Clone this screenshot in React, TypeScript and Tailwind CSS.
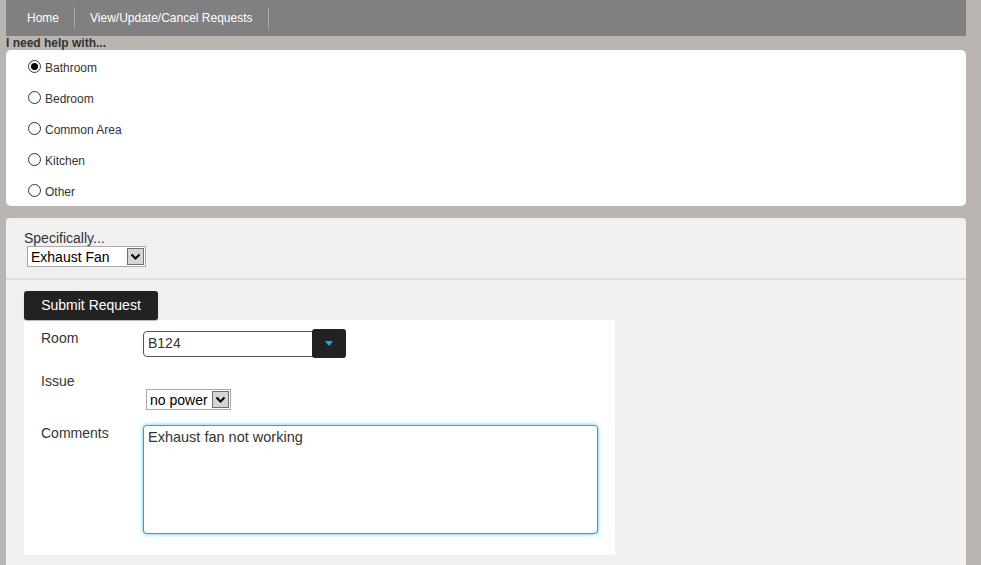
import React from 'react';

const rooms = ['Bathroom', 'Bedroom', 'Common Area', 'Kitchen', 'Other'];

const Chevron: React.FC = () => (
  <svg width="11" height="8" viewBox="0 0 11 8">
    <path d="M1.5 1.5 L5.5 5.5 L9.5 1.5" fill="none" stroke="#000" strokeWidth="2" />
  </svg>
);

// old windows-looking select box
const FakeSelect: React.FC<{ value: string; className: string; text: string }> = ({ value, className, text }) => (
  <div className={`flex items-center border border-[#a9a9a9] bg-white h-[21px] ${className}`}>
    <span className={`flex-1 pl-[3px] text-black leading-none ${text}`}>{value}</span>
    <span className="flex items-center justify-center w-[17px] h-[17px] mr-[1px] bg-[#d8d4cf] border border-[#707070]">
      <Chevron />
    </span>
  </div>
);

export default function App() {
  return (
    <div className="w-[981px] h-[565px] overflow-hidden bg-[#bab5b1] font-['Liberation_Sans',Arial,sans-serif] text-[#333]">
      <div className="ml-[6px] w-[960px]">
        {/* Nav */}
        <div className="h-[36px] bg-[#808080] flex items-center text-white text-[12px]">
          <div className="pl-[21px] pr-[15px] h-[22px] flex items-center border-r border-[#aaa]">Home</div>
          <div className="px-[15px] h-[22px] flex items-center border-r border-[#aaa]">View/Update/Cancel Requests</div>
        </div>

        <div className="font-bold text-[12px] leading-[14px]">I need help with...</div>

        {/* Room type */}
        <div className="bg-white rounded-[5px] h-[156px] pt-[2px] pl-[22px]">
          {rooms.map((r, i) => (
            <div key={r} className="flex items-center h-[31px] text-[12px]">
              <span className="w-[13px] h-[13px] rounded-full border border-[#333] bg-white flex items-center justify-center -mt-[3px]">
                {i === 0 && <span className="w-[7px] h-[7px] rounded-full bg-black" />}
              </span>
              <span className="ml-[4px]">{r}</span>
            </div>
          ))}
        </div>

        {/* Specifically */}
        <div className="mt-[12px] bg-[#f0f0f0] rounded-t-[4px] h-[62px] pt-[12px] pl-[18px] border-b-2 border-[#dddddd]">
          <div className="text-[14px] leading-[16px]">Specifically...</div>
          <FakeSelect value="Exhaust Fan" className="w-[119px] ml-[3px]" text="text-[14px]" />
        </div>

        {/* Request form */}
        <div className="bg-[#f0f0f0] h-[300px] pt-[11px] pl-[18px]">
          <button className="w-[134px] h-[29px] bg-[#222222] text-white text-[14px] rounded-[3px] shadow-[0_1px_1px_rgba(0,0,0,0.3)]">
            Submit Request
          </button>
          <div className="w-[591px] h-[235px] bg-white pl-[17px] pt-[9px]">
            <div className="flex">
              <div className="w-[102px] text-[14px] leading-[16px] pt-[1px]">Room</div>
              <div className="flex items-center">
                <div className="w-[170px] h-[26px] border border-[#555] rounded-l-[4px] flex items-center pl-[4px] text-[14px] text-[#333]">
                  B124
                </div>
                <div className="w-[34px] h-[29px] bg-[#222222] rounded-[3px] -ml-[1px] flex items-center justify-center">
                  <svg width="8" height="5" viewBox="0 0 8 5">
                    <path d="M0 0 H8 L4 5 Z" fill="#1ba8e0" />
                  </svg>
                </div>
              </div>
            </div>
            <div className="flex mt-[15px]">
              <div className="w-[105px] text-[14px] leading-[16px]">Issue</div>
              <FakeSelect value="no power" className="w-[85px] mt-[16px]" text="text-[14px]" />
            </div>
            <div className="flex mt-[15px]">
              <div className="w-[102px] text-[14px] leading-[16px]">Comments</div>
              <div className="w-[455px] h-[109px] border border-[#1aa7e0] border-t-[#888] rounded-[4px] shadow-[0_0_4px_#5bc8f0] pl-[4px] pt-[1px] text-[14.5px] text-[#333]">
                Exhaust fan not working
              </div>
            </div>
          </div>
        </div>
      </div>
    </div>
  );
}
